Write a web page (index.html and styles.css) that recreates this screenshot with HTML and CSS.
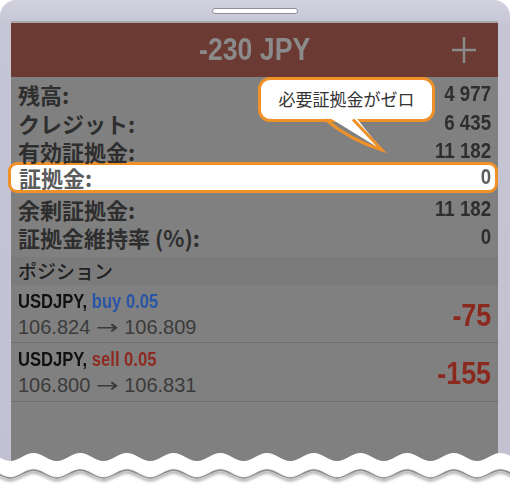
FILE: index.html
```html
<!DOCTYPE html>
<html lang="ja">
<head>
<meta charset="utf-8">
<title>証拠金</title>
<link rel="stylesheet" href="styles.css">
</head>
<body>
<div class="device">
  <div class="frame">
    <div class="speaker"></div>
    <div class="screen">
      <div class="topbar">
        <span class="title">-230 JPY</span>
        <svg class="plus" viewBox="0 0 24 26" width="24" height="26"><path d="M12 0V26M0 13H24" stroke="#8b8b8b" stroke-width="2.4" fill="none"/></svg>
      </div>
      <div class="summary">
        <div class="row"><span class="lbl">残高:</span><span class="val">4 977</span></div>
        <div class="row"><span class="lbl">クレジット:</span><span class="val">6 435</span></div>
        <div class="row"><span class="lbl">有効証拠金:</span><span class="val">11 182</span></div>
        <div class="row hl"><span class="lbl">証拠金:</span><span class="val">0</span></div>
        <div class="row"><span class="lbl">余剰証拠金:</span><span class="val">11 182</span></div>
        <div class="row"><span class="lbl">証拠金維持率 (%):</span><span class="val">0</span></div>
      </div>
      <div class="section">ポジション</div>
      <div class="pos">
        <div class="pos-info">
          <div class="pos-sym"><span class="sym">USDJPY,</span> <span class="buy">buy 0.05</span></div>
          <div class="pos-price">106.824 <span class="arrow">→</span> 106.809</div>
        </div>
        <div class="pos-pl">-75</div>
      </div>
      <div class="pos">
        <div class="pos-info">
          <div class="pos-sym"><span class="sym">USDJPY,</span> <span class="sell">sell 0.05</span></div>
          <div class="pos-price">106.800 <span class="arrow">→</span> 106.831</div>
        </div>
        <div class="pos-pl">-155</div>
      </div>
    </div>
  </div>
  <div class="balloon">必要証拠金がゼロ</div>
  <svg class="tail" viewBox="0 0 100 45" width="100" height="45">
    <path d="M25 5 L54 5 L82 40 Z" fill="#fff"/>
    <path d="M25.5 9.5 Q50 30 82 40 L53 9.5" fill="none" stroke="#ef9129" stroke-width="3" stroke-linejoin="miter"/>
  </svg>
  <svg class="cut" viewBox="0 0 510 46" width="510" height="46">
    <defs>
      <filter id="sh" x="-5%" y="-50%" width="110%" height="200%">
        <feGaussianBlur stdDeviation="1.6"/>
      </filter>
    </defs>
    <path fill="#fff" d="M-13.2 13 C-4.8 13 1.75 21 10.15 21 S25.1 13 33.5 13 S48.45 21 56.85 21 S71.8 13 80.2 13 S95.15 21 103.55 21 S118.5 13 126.9 13 S141.85 21 150.25 21 S165.2 13 173.6 13 S188.55 21 196.95 21 S211.9 13 220.3 13 S235.25 21 243.65 21 S258.6 13 267 13 S281.95 21 290.35 21 S305.3 13 313.7 13 S328.65 21 337.05 21 S352 13 360.4 13 S375.35 21 383.75 21 S398.7 13 407.1 13 S422.05 21 430.45 21 S445.4 13 453.8 13 S468.75 21 477.15 21 S492.1 13 500.5 13 S515.45 21 523.85 21 L523.85 46 L-13.2 46 Z"/>
    <g transform="translate(0 19)">
      <path fill="none" stroke="#9a9a9a" stroke-width="2.5" filter="url(#sh)" d="M-13.2 13 C-4.8 13 1.75 21 10.15 21 S25.1 13 33.5 13 S48.45 21 56.85 21 S71.8 13 80.2 13 S95.15 21 103.55 21 S118.5 13 126.9 13 S141.85 21 150.25 21 S165.2 13 173.6 13 S188.55 21 196.95 21 S211.9 13 220.3 13 S235.25 21 243.65 21 S258.6 13 267 13 S281.95 21 290.35 21 S305.3 13 313.7 13 S328.65 21 337.05 21 S352 13 360.4 13 S375.35 21 383.75 21 S398.7 13 407.1 13 S422.05 21 430.45 21 S445.4 13 453.8 13 S468.75 21 477.15 21 S492.1 13 500.5 13 S515.45 21 523.85 21"/>
    </g>
    <g transform="translate(0 17)">
      <path fill="none" stroke="#8a8a8a" stroke-width="1.4" d="M-13.2 13 C-4.8 13 1.75 21 10.15 21 S25.1 13 33.5 13 S48.45 21 56.85 21 S71.8 13 80.2 13 S95.15 21 103.55 21 S118.5 13 126.9 13 S141.85 21 150.25 21 S165.2 13 173.6 13 S188.55 21 196.95 21 S211.9 13 220.3 13 S235.25 21 243.65 21 S258.6 13 267 13 S281.95 21 290.35 21 S305.3 13 313.7 13 S328.65 21 337.05 21 S352 13 360.4 13 S375.35 21 383.75 21 S398.7 13 407.1 13 S422.05 21 430.45 21 S445.4 13 453.8 13 S468.75 21 477.15 21 S492.1 13 500.5 13 S515.45 21 523.85 21"/>
    </g>
  </svg>
</div>
</body>
</html>
```

FILE: styles.css
```css
html, body {
  margin: 0;
  padding: 0;
  background: #fff;
}

body {
  font-family: "Noto Sans CJK JP", "Liberation Sans", sans-serif;
}

.device {
  position: relative;
  width: 510px;
  height: 486px;
  overflow: hidden;
  background: #fff;
}

.frame {
  box-sizing: border-box;
  height: 486px;
  padding: 8px 12px 0 11px;
  border-radius: 16px 16px 0 0;
  background: linear-gradient(180deg, #d2d1de 0, #c6c5d5 26px, #c2c1d1 100%);
  display: flex;
  flex-direction: column;
}

.speaker {
  box-sizing: border-box;
  width: 86px;
  height: 6px;
  margin: 0 auto 7px;
  border: 1px solid #8f8e98;
  border-radius: 4px;
  background: #fff;
}

.screen {
  flex: 1;
  background: #808080;
  border-top: 2px solid #a7a7a7;
  display: flex;
  flex-direction: column;
}

.topbar {
  height: 54px;
  background: #6b3a33;
  display: grid;
  grid-template-columns: 1fr auto 1fr;
  align-items: center;
}

.title {
  grid-column: 2;
  font-family: "Liberation Sans", Arial, sans-serif;
  font-weight: bold;
  font-size: 31px;
  line-height: 36px;
  color: #8b8b8b;
  transform: scaleX(0.86);
  transform-origin: center;
}

.plus {
  grid-column: 3;
  justify-self: end;
  margin-right: 22px;
  display: block;
}

.summary {
  padding: 3px 0 5.4px;
}

.row {
  height: 28.6px;
  padding: 0 7px;
  display: flex;
  justify-content: space-between;
  align-items: center;
}

.lbl {
  font-family: "Noto Sans CJK JP", sans-serif;
  font-weight: bold;
  font-size: 22px;
  line-height: 24px;
  color: #2e2e2e;
}

.val {
  font-family: "Liberation Sans", Arial, sans-serif;
  font-weight: bold;
  font-size: 22px;
  line-height: 24px;
  color: #2e2e2e;
  transform: scaleX(0.85);
  transform-origin: right center;
}

.row.hl {
  box-sizing: border-box;
  height: 31px;
  margin: -3.8px 0 1.4px -3px;
  padding: 0 4px 0 8px;
  border: 3px solid #ef9129;
  border-radius: 9px;
  background: #fff;
}

.row.hl .lbl {
  color: #5c5c5c;
}

.row.hl .val {
  color: #5e5e5e;
}

.section {
  height: 28px;
  padding-left: 7px;
  background: #7b7b7b;
  font-family: "Noto Sans CJK JP", sans-serif;
  font-weight: 500;
  font-size: 19px;
  line-height: 28px;
  color: #202020;
}

.pos {
  height: 57.4px;
  padding: 0 7px;
  border-bottom: 1px solid #6f6f6f;
  display: flex;
  justify-content: space-between;
}

.pos-info {
  padding-top: 4px;
}

.pos-sym {
  font-family: "Liberation Sans", Arial, sans-serif;
  font-weight: bold;
  font-size: 20px;
  line-height: 24px;
  color: #101010;
  white-space: nowrap;
  transform: scaleX(0.83);
  transform-origin: left center;
}

.buy {
  color: #2a55a6;
}

.sell {
  color: #8e2a20;
}

.pos-price {
  font-family: "Liberation Sans", Arial, sans-serif;
  font-size: 20px;
  line-height: 28px;
  color: #3b3b3b;
  white-space: nowrap;
}

.arrow {
  display: inline-block;
  margin: 0 3px;
  font-family: "DejaVu Sans", sans-serif;
  font-size: 20px;
  transform: scaleX(1.35);
}

.pos-pl {
  align-self: center;
  padding-top: 2px;
  font-family: "Liberation Sans", Arial, sans-serif;
  font-weight: bold;
  font-size: 32px;
  line-height: 36px;
  color: #8b291f;
  transform: scaleX(0.84);
  transform-origin: right center;
}

.balloon {
  position: absolute;
  left: 258px;
  top: 77px;
  box-sizing: border-box;
  width: 177px;
  height: 45px;
  border: 3px solid #ef9129;
  border-radius: 12px;
  background: #fff;
  font-family: "Noto Sans CJK JP", sans-serif;
  font-size: 17px;
  line-height: 38px;
  text-align: center;
  color: #333;
}

.tail {
  position: absolute;
  left: 300px;
  top: 110px;
}

.cut {
  position: absolute;
  left: 0;
  top: 440px;
}
```
